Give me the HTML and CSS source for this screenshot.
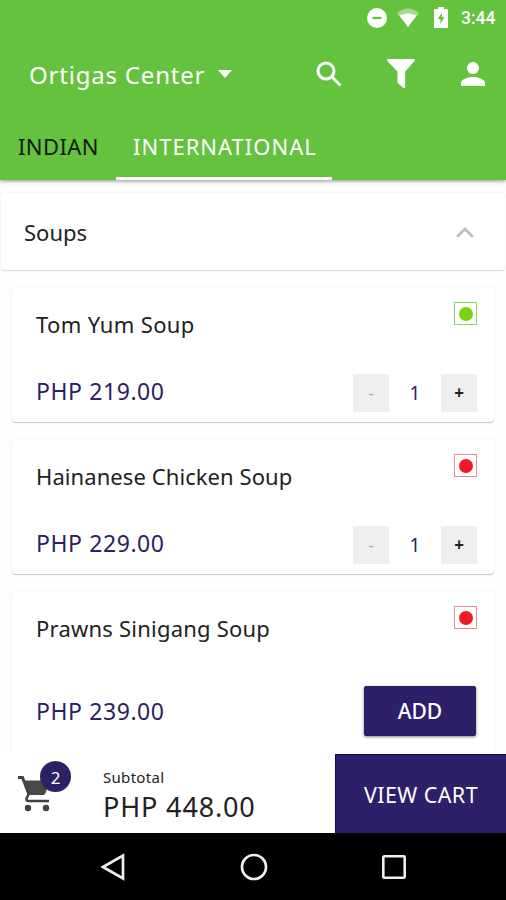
FILE: index.html
```html
<!DOCTYPE html>
<html lang="en">
<head>
<meta charset="utf-8">
<title>Menu</title>
<link rel="stylesheet" href="styles.css">
</head>
<body>
<div class="screen">
  <header class="header">
    <div class="status">
      <svg class="dnd" width="20" height="20" viewBox="0 0 20 20"><circle cx="10" cy="10" r="10" fill="#fff"/><path d="M5.500 10h9" stroke="#64c23f" stroke-width="2.200"/></svg>
      <svg class="wifi" width="24" height="20" viewBox="0 0 24 20"><path d="M1 5Q12-4 23 5L12 19Z" fill="#fff" opacity=".4"/><path d="M3.500 7.500Q12 3.500 20.500 7.500L12 19Z" fill="#fff"/></svg>
      <svg class="battery" width="14" height="21" viewBox="0 0 14 21"><path d="M1 2h3V0h6v2h3q1 0 1 1v17q0 1-1 1H1q-1 0-1-1V3q0-1 1-1Z" fill="#fff"/><path d="M8 5.500 3.700 12h2.800v5L10.300 10H7.700Z" fill="#64c23f"/></svg>
      <span class="time">3:44</span>
    </div>
    <div class="toolbar">
      <span class="place">Ortigas Center</span>
      <svg class="caret" width="14" height="8" viewBox="0 0 14 8"><path d="M0 0h14L7 8Z" fill="#fff"/></svg>
      <svg class="search" width="26" height="26" viewBox="0 0 26 26" fill="none" stroke="#fff" stroke-width="3"><circle cx="10" cy="10" r="8"/><path d="m16 16 8.500 8.500"/></svg>
      <svg class="filter" width="28" height="30" viewBox="0 0 28 30"><path d="M1 0h26q1 0 1 1.500L18.200 12.500V28q0 1.800-1.600 1L10.500 24V12.500L0 1.800Q0 0 1 0Z" fill="#fff"/></svg>
      <svg class="person" width="24" height="24" viewBox="0 0 24 24" fill="#fff"><circle cx="12" cy="6" r="6"/><path d="M0 24v-3.200C0 16.800 8 15 12 15s12 1.800 12 5.800V24Z"/></svg>
    </div>
    <nav class="tabs">
      <a class="tab tab-indian"><span>INDIAN</span></a>
      <a class="tab tab-international"><span>INTERNATIONAL</span></a>
    </nav>
  </header>
  <main class="list">
    <section class="category">
      <span class="category-name">Soups</span>
      <svg width="18" height="11" viewBox="0 0 18 11"><path d="m1.200 9.800 7.800-7.800 7.800 7.800" fill="none" stroke="#bdbdbd" stroke-width="2.700"/></svg>
    </section>
    <article class="card">
      <div class="row top"><h2 class="n1">Tom Yum Soup</h2><i class="diet veg"></i></div>
      <div class="row"><span class="price">PHP 219.00</span><div class="stepper"><b class="minus">-</b><span>1</span><b>+</b></div></div>
    </article>
    <article class="card">
      <div class="row top"><h2 class="n2">Hainanese Chicken Soup</h2><i class="diet meat"></i></div>
      <div class="row"><span class="price">PHP 229.00</span><div class="stepper"><b class="minus">-</b><span>1</span><b>+</b></div></div>
    </article>
    <article class="card last">
      <div class="row top"><h2 class="n3">Prawns Sinigang Soup</h2><i class="diet meat"></i></div>
      <div class="row"><span class="price">PHP 239.00</span><button class="add"><span>ADD</span></button></div>
    </article>
  </main>
  <footer class="cart">
    <div class="cart-icon">
      <svg width="34" height="36" viewBox="0 0 34 36"><path d="M6.500 4.500h24q1.500 0 1 1.500l-4.200 11.500q-.6 1.500-2.300 1.500H12Z" fill="#484848"/><path d="M0 1.500h4.500L11 18.500" fill="none" stroke="#424242" stroke-width="3"/><path d="M11 17.500 8.500 22.500q-.5 2.500 2 2.500H31" fill="none" stroke="#424242" stroke-width="2.600"/><circle cx="10" cy="32" r="3.200" fill="#424242"/><circle cx="28" cy="32" r="3.200" fill="#424242"/></svg>
      <span class="badge">2</span>
    </div>
    <div class="totals"><span class="label">Subtotal</span><span class="total">PHP 448.00</span></div>
    <button class="view"><span>VIEW CART</span></button>
  </footer>
  <div class="system-nav">
    <svg width="24" height="28" viewBox="0 0 24 28"><path d="M22 2.500v23L2 14Z" fill="none" stroke="#eee" stroke-width="2.700"/></svg>
    <svg width="28" height="28" viewBox="0 0 28 28"><circle cx="14" cy="14" r="12" fill="none" stroke="#eee" stroke-width="2.700"/></svg>
    <svg width="24" height="24" viewBox="0 0 24 24"><rect x="1.300" y="1.300" width="21.400" height="21.400" rx="1" fill="none" stroke="#eee" stroke-width="2.600"/></svg>
  </div>
</div>
</body>
</html>
```
FILE: styles.css
```css
* { box-sizing: border-box; }
body { margin: 0; font-family: "Noto Sans", sans-serif; background: #fff; }
button { border: 0; padding: 0; font: inherit; }
svg { display: block; flex: none; }
.screen { width: 506px; height: 900px; display: flex; flex-direction: column; overflow: hidden; }

.header { height: 180px; flex: none; background: #64c23f; color: #fff; box-shadow: 0 1px 4px rgba(0,0,0,.45); position: relative; }
.status { height: 35px; display: flex; align-items: center; justify-content: flex-end; padding-right: 11px; }
.dnd { margin-right: 9px; }
.wifi { margin-right: 14px; }
.battery { margin-right: 13px; }
.time { font: 500 17.5px/20px Roboto, sans-serif; width: 34px; white-space: nowrap; }
.toolbar { height: 78px; display: flex; align-items: center; padding: 0 21px 0 29px; }
.place { font-size: 24px; width: 189px; white-space: nowrap; letter-spacing: .8px; }
.search { margin-left: 84px; }
.filter { margin-left: 45px; }
.person { margin-left: auto; }
.tabs { display: flex; height: 67px; font-size: 22px; line-height: 67px; white-space: nowrap; }
.tab-indian { width: 116px; padding-left: 18px; color: #101c0c; letter-spacing: .4px; }
.tab-international { width: 216px; padding-left: 17px; border-bottom: 3px solid #fff; letter-spacing: 1px; }

.list { flex: 1; min-height: 0; overflow: hidden; padding: 13px 1px 0; background: #fefefe; }
.category { height: 77px; display: flex; align-items: center; justify-content: space-between; padding: 1px 31px 0 23px; margin-bottom: 17px; background: #fff; border-radius: 3px; box-shadow: 0 0 2px rgba(0,0,0,.1), 0 1px 1px rgba(0,0,0,.12); }
.category-name { font-size: 22px; color: #222; }
.card { height: 135px; margin: 0 11px 17px; padding: 15px 17px 0 24px; border-radius: 4px; background: #fff; box-shadow: 0 0 2px rgba(0,0,0,.1), 0 1px 1px rgba(0,0,0,.2); }
.last { height: 180px; }
.row { display: flex; align-items: center; justify-content: space-between; }
.top { height: 44px; align-items: flex-start; margin-bottom: 26px; }
h2 { margin: 7px 0 0; font-size: 22px; line-height: 30px; font-weight: 400; color: #222; white-space: nowrap; }
.n1 { letter-spacing: .35px; }
.n2 { letter-spacing: .08px; }
.n3 { letter-spacing: .22px; }
.price { font-size: 23px; line-height: 36px; color: #2c2165; white-space: nowrap; letter-spacing: .58px; padding-bottom: 3px; }
.diet { width: 23px; height: 23px; border: 1.5px solid; display: grid; place-items: center; }
.diet::after { content: ""; width: 14px; height: 14px; border-radius: 50%; background: #79d20e; }
.veg { border-color: #8bd75c; }
.meat { border-color: #ef8c8f; }
.meat::after { background: #ed1c24; }
.stepper { display: flex; align-items: center; width: 124px; height: 38px; justify-content: space-between; color: #2c2165; font-size: 19px; margin-top: 2px; }
.stepper b { width: 36px; height: 38px; background: #efefef; color: #222; font-size: 17px; line-height: 37px; text-align: center; }
.stepper .minus { color: #aaa; font-weight: 400; }
.last .top { margin-bottom: 36px; }
.last .price { padding-bottom: 0; }
.add { width: 112px; height: 50px; background: #2d2069; color: #fff; font-size: 21px; font-weight: 500; border-radius: 2px; box-shadow: 0 1px 3px rgba(0,0,0,.5); margin-right: 1px; }

.cart { height: 79px; flex: none; display: flex; background: #fff; position: relative; }
.cart-icon { width: 103px; padding: 22px 0 0 18px; position: relative; }
.badge { position: absolute; left: 40px; top: 7px; width: 31px; height: 31px; border-radius: 50%; background: #2c2165; color: #fff; font: 17px/33px "Noto Sans", sans-serif; text-align: center; }
.totals { width: 232px; display: flex; flex-direction: column; padding-top: 13px; color: #222; white-space: nowrap; }
.label { font-size: 15px; line-height: 20px; letter-spacing: .3px; }
.total { font-size: 27px; line-height: 36px; margin-top: 2px; letter-spacing: .85px; }
.view { flex: 1; background: #2d2069; color: #fff; font-size: 21.5px; letter-spacing: .4px; border-left: 1px solid #160766; border-top: 1px solid #160766; }
.system-nav { height: 67px; flex: none; background: #000; display: flex; align-items: center; justify-content: space-between; padding: 0 100px 0 101px; }
```
